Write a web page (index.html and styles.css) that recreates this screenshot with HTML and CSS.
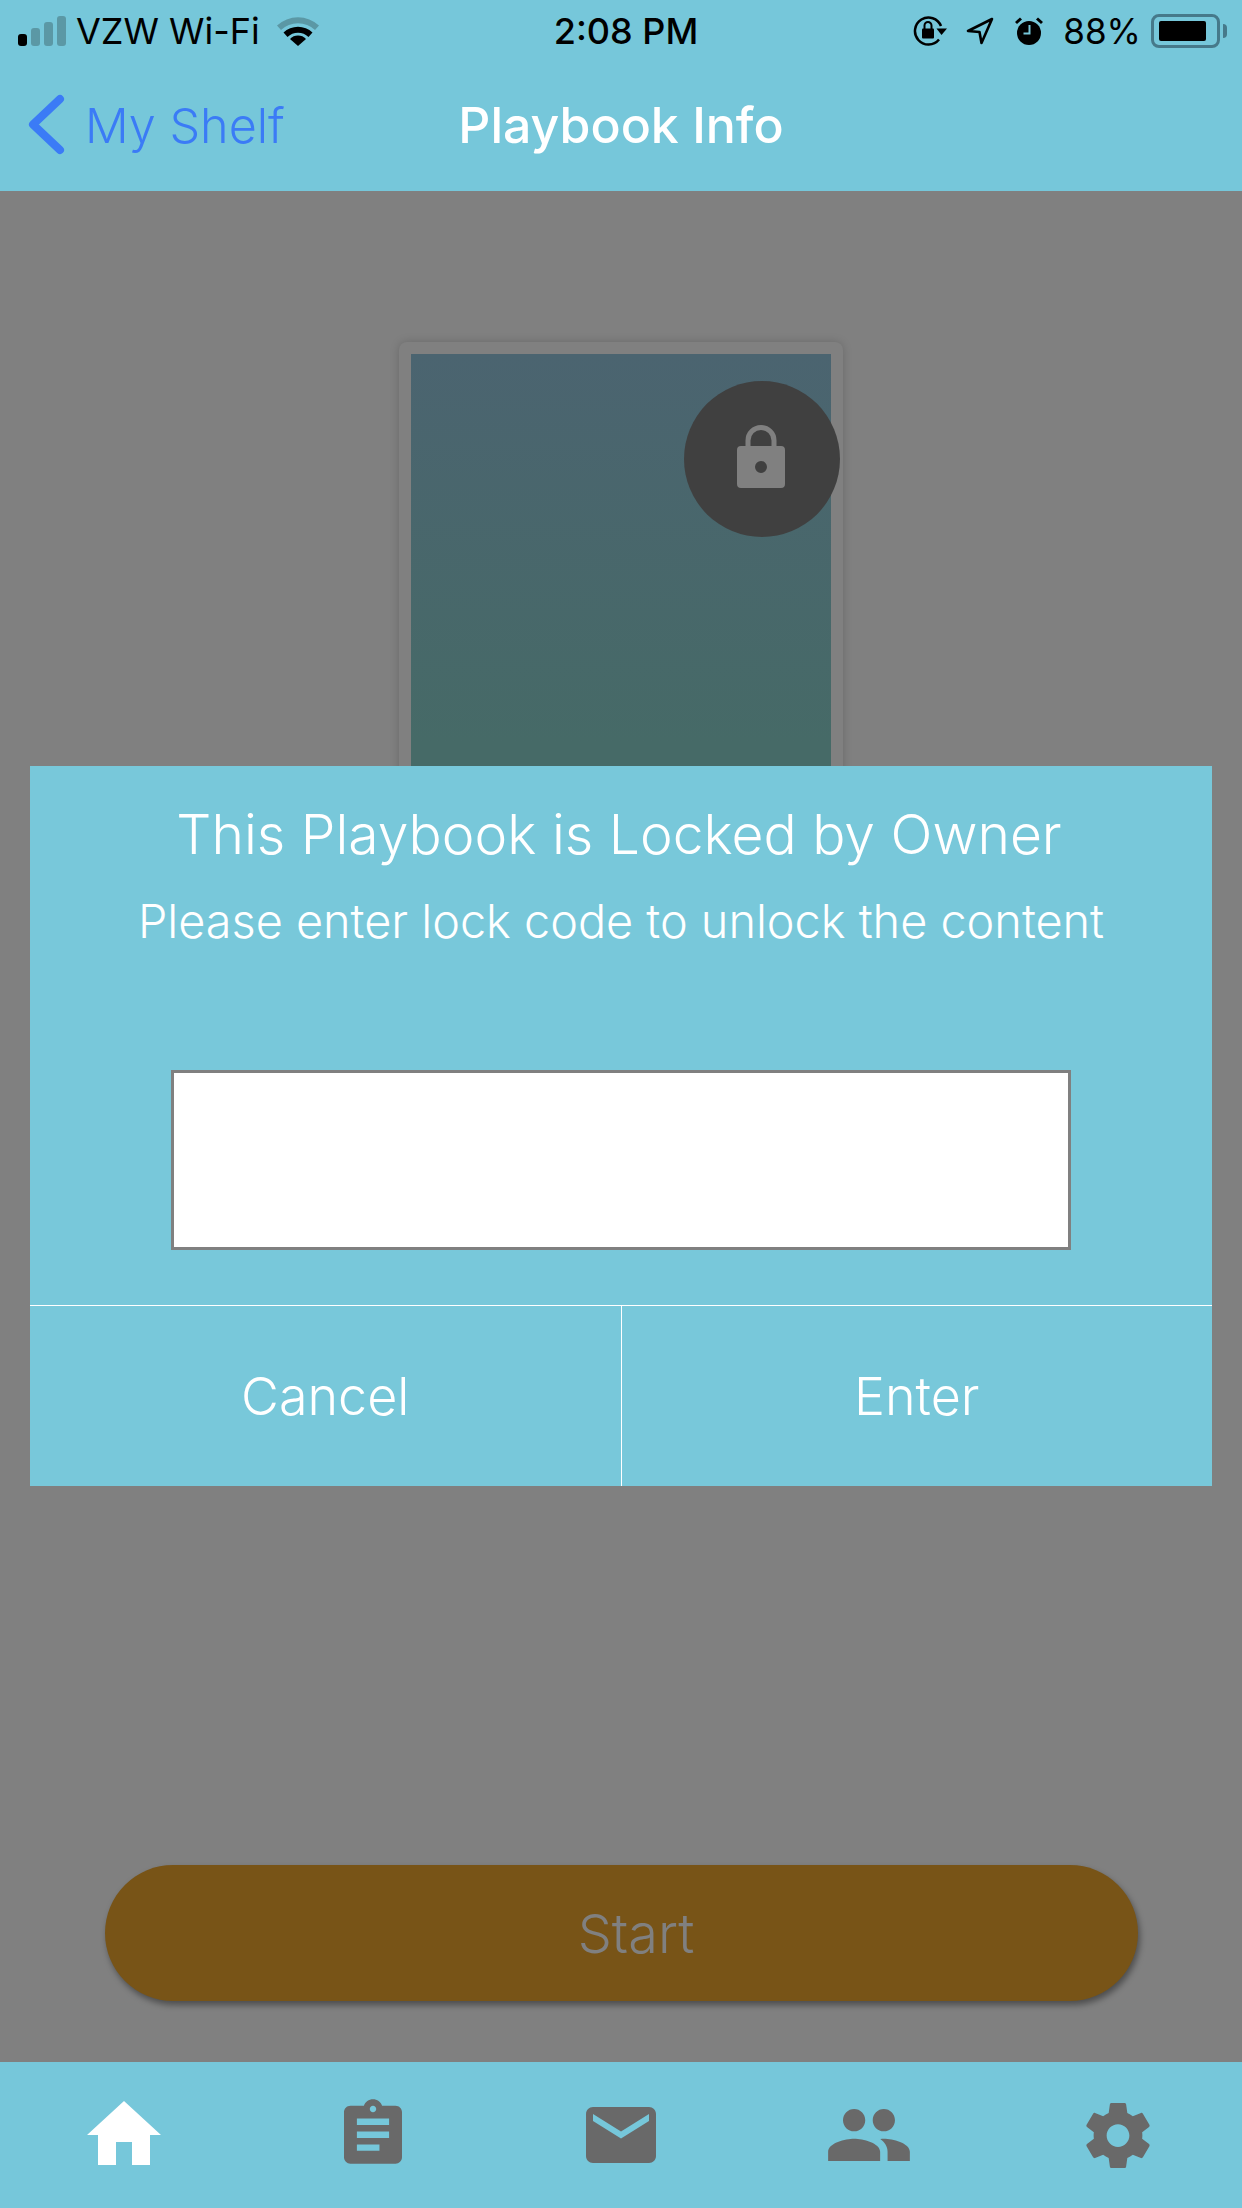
FILE: index.html
```html
<!DOCTYPE html>
<html lang="en">

<head>
    <meta charset="UTF-8" />
    <meta name="viewport" content="width=device-width, initial-scale=1.0" />
    <title>Playbook Info</title>

    <link rel="stylesheet" href="styles.css">
</head>

<body>
    <header class="top-bar">
        <div class="status-bar">
            <div class="status-left">
                <div class="signal">
                    <span class="bar bar-1"></span>
                    <span class="bar bar-2"></span>
                    <span class="bar bar-3"></span>
                    <span class="bar bar-4"></span>
                </div>
                <span class="carrier">VZW Wi-Fi</span>
                <svg class="wifi" viewBox="0 0 42 30">
                    <path d="M0 9.500 A31 31 0 0 1 42 9.500 L38 14 A25 25 0 0 0 4 14 Z" fill="#5b98a5" />
                    <path d="M6.500 16.500 A21 21 0 0 1 35.500 16.500 L31.500 21 A15 15 0 0 0 10.500 21 Z" />
                    <path d="M13 23 A11 11 0 0 1 29 23 L21 30 Z" />
                </svg>
            </div>
            <div class="clock">2:08 PM</div>
            <div class="status-right">
                <svg class="rotation-lock" viewBox="0 0 34 30">
                    <path d="M26 23.500 A13.500 13.500 0 1 1 28 10" fill="none" stroke="#000" stroke-width="2.500" />
                    <path d="M23.500 12.500 L34 12.500 L28.500 19 Z" />
                    <rect x="9" y="12.500" width="12" height="10" rx="1" />
                    <path d="M11.500 13 V9.500 A3.500 3.500 0 0 1 18.500 9.500 V13" fill="none" stroke="#000" stroke-width="2" />
                </svg>
                <svg class="location" viewBox="0 0 28 28">
                    <path d="M26 2 L2 14 L13.500 15 L15.500 26 Z" fill="none" stroke="#000" stroke-width="2.600" stroke-linejoin="round" />
                </svg>
                <svg class="alarm" viewBox="0 0 28 28">
                    <circle cx="14" cy="16" r="12" />
                    <path d="M1 6 L6 1.500 M22 1.500 L27 6" stroke="#000" stroke-width="3" fill="none" />
                    <path d="M14.500 8 V16.500 H8.500" stroke="#76c7da" stroke-width="2" fill="none" />
                </svg>
                <span class="battery-text">88%</span>
                <div class="battery">
                    <div class="battery-body">
                        <div class="battery-fill"></div>
                    </div>
                    <div class="battery-tip"></div>
                </div>
            </div>
        </div>
        <nav class="nav-bar">
            <a class="back-link">
                <svg class="chevron" viewBox="0 0 37 61">
                    <path d="M32 5 L5 30.500 L32 56" fill="none" stroke="#3b7bf6" stroke-width="8" stroke-linecap="round" stroke-linejoin="round" />
                </svg>
                <span>My Shelf</span>
            </a>
            <h1 class="nav-title">Playbook Info</h1>
        </nav>
    </header>

    <main class="content">
        <div class="book-card">
            <div class="book-cover"></div>
            <div class="lock-badge">
                <svg class="lock-icon" viewBox="0 0 48 63">
                    <path d="M11 24 V15.500 A13 13 0 0 1 37 15.500 V24" fill="none" stroke="#808080" stroke-width="5" />
                    <path fill-rule="evenodd" fill="#808080" d="M4 21 H44 A4 4 0 0 1 48 25 V59 A4 4 0 0 1 44 63 H4 A4 4 0 0 1 0 59 V25 A4 4 0 0 1 4 21 Z M24 36 A6 6 0 1 0 24 48 A6 6 0 1 0 24 36 Z" />
                </svg>
            </div>
        </div>
        <button class="start-btn">Start</button>

        <div class="modal">
            <div class="modal-body">
                <h2 class="modal-title">This Playbook is Locked by Owner</h2>
                <p class="modal-text">Please enter lock code to unlock the content</p>
                <input class="code-input" type="text" />
            </div>
            <div class="modal-actions">
                <button class="modal-btn">Cancel</button>
                <button class="modal-btn">Enter</button>
            </div>
        </div>
    </main>

    <footer class="tab-bar">
        <div class="tab">
            <svg class="icon-home" viewBox="0 0 74 64">
                <path fill="#fff" d="M37 0 L74 34 H63 V64 H45 V41 H29 V64 H11 V34 H0 Z" />
            </svg>
        </div>
        <div class="tab">
            <svg class="icon-clip" viewBox="3 1 18 20">
                <path d="M19 3h-4.180C14.400 1.840 13.300 1 12 1c-1.300 0-2.400.840-2.820 2H5c-1.100 0-2 .900-2 2v14c0 1.100.900 2 2 2h14c1.100 0 2-.900 2-2V5c0-1.100-.900-2-2-2zm-7 0c.550 0 1 .450 1 1s-.450 1-1 1-1-.450-1-1 .450-1 1-1zm2 14H7v-2h7v2zm3-4H7v-2h10v2zm0-4H7V7h10v2z" />
            </svg>
        </div>
        <div class="tab">
            <svg class="icon-mail" viewBox="2 4 20 16">
                <path d="M20 4H4c-1.100 0-1.990.900-1.990 2L2 18c0 1.100.900 2 2 2h16c1.100 0 2-.900 2-2V6c0-1.100-.900-2-2-2zm0 4l-8 5-8-5V6l8 5 8-5v2z" />
            </svg>
        </div>
        <div class="tab">
            <svg class="icon-people" viewBox="1 5 22 14">
                <path d="M16 11c1.660 0 2.990-1.340 2.990-3S17.660 5 16 5c-1.660 0-3 1.340-3 3s1.340 3 3 3zm-8 0c1.660 0 2.990-1.340 2.990-3S9.660 5 8 5C6.340 5 5 6.340 5 8s1.340 3 3 3zm0 2c-2.330 0-7 1.170-7 3.500V19h14v-2.500c0-2.330-4.670-3.500-7-3.500zm8 0c-.290 0-.620.020-.970.050 1.160.840 1.970 1.970 1.970 3.450V19h6v-2.500c0-2.330-4.670-3.500-7-3.500z" />
            </svg>
        </div>
        <div class="tab">
            <svg class="icon-gear" viewBox="2.300 2 19.400 20">
                <path d="M19.430 12.980c.040-.320.070-.640.070-.980s-.030-.660-.070-.980l2.110-1.650c.190-.150.240-.420.120-.640l-2-3.460c-.120-.220-.390-.300-.610-.220l-2.490 1c-.520-.400-1.080-.730-1.690-.980l-.380-2.650C14.460 2.180 14.250 2 14 2h-4c-.250 0-.460.180-.490.420l-.380 2.650c-.610.250-1.170.590-1.690.980l-2.490-1c-.230-.090-.490 0-.610.220l-2 3.460c-.130.220-.070.490.120.640l2.110 1.650c-.040.320-.070.650-.070.980s.030.660.070.980l-2.110 1.650c-.190.150-.240.420-.120.640l2 3.460c.120.220.390.300.610.220l2.490-1c.520.400 1.080.730 1.690.980l.380 2.650c.030.240.240.420.49.420h4c.250 0 .460-.180.490-.420l.380-2.650c.610-.250 1.170-.590 1.690-.980l2.490 1c.230.090.490 0 .610-.220l2-3.460c.120-.220.070-.490-.120-.640l-2.110-1.650zM12 15.500c-1.930 0-3.500-1.570-3.500-3.500s1.570-3.500 3.500-3.500 3.500 1.570 3.500 3.500-1.570 3.500-3.500 3.500z" />
            </svg>
        </div>
    </footer>
</body>

</html>
```

FILE: styles.css
```css
* {
    box-sizing: border-box;
}

body {
    font-family: Inter, "Liberation Sans", sans-serif;
    display: flex;
    flex-direction: column;
    width: 1242px;
    height: 2208px;
    margin: 0;
    background-color: #808080;
}

.top-bar {
    height: 191px;
    background-color: #76c7da;
}

.status-bar {
    display: grid;
    grid-template-columns: 1fr auto 1fr;
    align-items: center;
    height: 61px;
    padding: 0 15px;
}

.status-left,
.status-right {
    display: flex;
    align-items: center;
}

.status-right {
    justify-content: flex-end;
}

.signal {
    display: flex;
    align-items: flex-end;
    gap: 4px;
    height: 30px;
    margin: 0 10px 0 3px;
}

.bar {
    width: 9px;
    background-color: #5b98a5;
    border-radius: 3px;
}

.bar-1 {
    height: 12px;
    background-color: #000;
}

.bar-2 {
    height: 18px;
}

.bar-3 {
    height: 24px;
}

.bar-4 {
    height: 30px;
}

.carrier {
    font-size: 36px;
    color: #000;
}

.wifi {
    width: 42px;
    height: 30px;
    margin-left: 17px;
}

.clock {
    margin-left: 10px;
    font-size: 36px;
    font-weight: 500;
    color: #000;
}

.rotation-lock {
    width: 34px;
    height: 30px;
}

.location {
    width: 28px;
    height: 28px;
    margin-left: 19px;
}

.alarm {
    width: 28px;
    height: 28px;
    margin-left: 21px;
}

.battery-text {
    font-size: 35px;
    color: #000;
    margin-left: 20px;
}

.battery {
    display: flex;
    align-items: center;
    margin-left: 10px;
}

.battery-body {
    width: 69px;
    height: 34px;
    padding: 4px 11px 4px 5px;
    border: 3px solid #46798a;
    border-radius: 8px;
}

.battery-fill {
    height: 100%;
    background-color: #000;
    border-radius: 2px;
}

.battery-tip {
    width: 4px;
    height: 14px;
    margin-left: 3px;
    background-color: #46798a;
    border-radius: 0 4px 4px 0;
}

.nav-bar {
    display: grid;
    grid-template-columns: 1fr auto 1fr;
    align-items: center;
    height: 130px;
    padding: 0 28px 2px;
}

.back-link {
    display: flex;
    align-items: center;
    font-size: 48.5px;
    font-weight: 300;
    color: #3b7bf6;
}

.chevron {
    width: 37px;
    height: 61px;
    margin: 0 20px 2px 0;
}

.nav-title {
    margin: 0;
    font-size: 50px;
    font-weight: 500;
    color: #fff;
}

.content {
    position: relative;
    flex: 1;
    display: flex;
    flex-direction: column;
    align-items: center;
    justify-content: space-between;
    padding: 151px 0 61px;
    background-color: #808080;
}

.book-card {
    position: relative;
    width: 444px;
    height: 800px;
    padding: 12px;
    background-color: #808080;
    border-radius: 8px;
    box-shadow: 0 0 10px rgba(0, 0, 0, 0.18);
}

.book-cover {
    height: 100%;
    background: linear-gradient(180deg, #4b6470 0%, #466a67 50%);
}

.lock-badge {
    position: absolute;
    top: 39px;
    left: 285px;
    display: flex;
    align-items: center;
    justify-content: center;
    width: 156px;
    height: 156px;
    background-color: #404040;
    border-radius: 50%;
}

.lock-icon {
    width: 48px;
    height: 63px;
    margin: 0 2px 5px 0;
}

.start-btn {
    width: 1033px;
    height: 136px;
    padding: 0 0 0 30px;
    font-family: inherit;
    font-size: 54px;
    font-weight: 300;
    color: #808080;
    background-color: #785417;
    border: none;
    border-radius: 68px;
    box-shadow: 2px 4px 6px rgba(0, 0, 0, 0.4);
}

.modal {
    position: absolute;
    top: 575px;
    left: 30px;
    width: 1182px;
    height: 720px;
    display: flex;
    flex-direction: column;
    color: #fff;
    background-color: #78c8da;
}

.modal-body {
    flex: 1;
    display: flex;
    flex-direction: column;
    align-items: center;
    padding-top: 35px;
    border-bottom: 1px solid #fff;
}

.modal-title {
    margin: 0 4px 0 0;
    font-size: 55.2px;
    font-weight: 300;
    line-height: 66px;
}

.modal-text {
    margin: 27px 0 0;
    font-size: 46.8px;
    font-weight: 300;
    line-height: 54px;
}

.code-input {
    width: 900px;
    height: 180px;
    margin-top: 122px;
    background-color: #fff;
    border: 3px solid #808080;
}

.modal-actions {
    display: flex;
    height: 180px;
}

.modal-btn {
    flex: 1;
    font-family: inherit;
    font-size: 52px;
    font-weight: 300;
    color: #fff;
    background: none;
    border: none;
}

.modal-btn + .modal-btn {
    border-left: 1px solid #fff;
}

.tab-bar {
    display: flex;
    height: 146px;
    background-color: #76c7da;
}

.tab {
    flex: 1;
    display: flex;
    align-items: center;
    justify-content: center;
    fill: #696969;
}

.icon-home {
    width: 74px;
    height: 64px;
    margin-bottom: 4px;
}

.icon-clip {
    width: 58px;
    height: 65px;
    margin-bottom: 7px;
}

.icon-mail {
    width: 70px;
    height: 56px;
}

.icon-people {
    width: 82px;
    height: 52px;
}

.icon-gear {
    width: 64px;
    height: 65px;
}
```
